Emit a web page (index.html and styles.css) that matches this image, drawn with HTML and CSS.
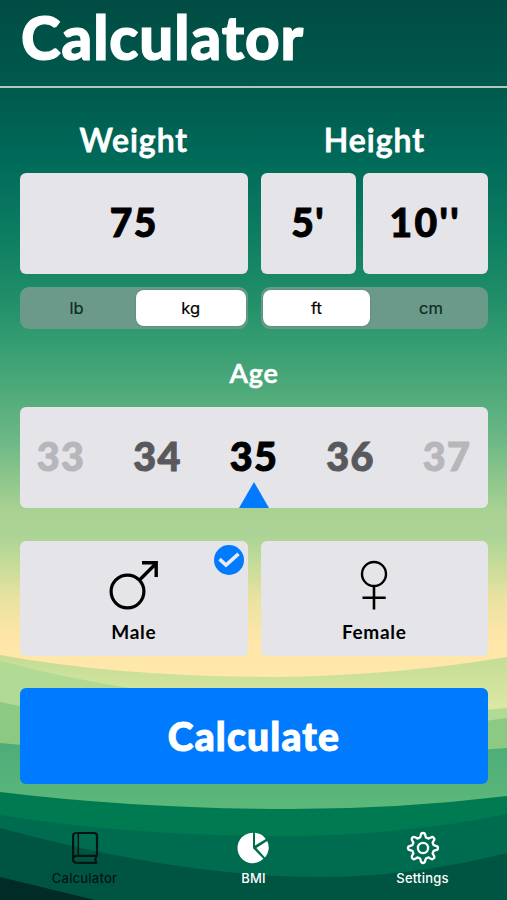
FILE: index.html
```html
<!DOCTYPE html>
<html lang="en">
<head>
<meta charset="utf-8">
<meta name="viewport" content="width=device-width, initial-scale=1">
<title>Calculator</title>
<link rel="stylesheet" href="styles.css">
</head>
<body>
<svg class="scene" viewBox="0 0 507 900" preserveAspectRatio="none" aria-hidden="true">
  <defs>
    <linearGradient id="sky" x1="0" y1="0" x2="0" y2="900" gradientUnits="userSpaceOnUse">
      <stop offset="0" stop-color="#004c43"/>
      <stop offset=".1" stop-color="#005a4e"/>
      <stop offset=".18" stop-color="#006b5a"/>
      <stop offset=".26" stop-color="#0d7d62"/>
      <stop offset=".33" stop-color="#208e68"/>
      <stop offset=".385" stop-color="#379e73"/>
      <stop offset=".44" stop-color="#52ab7b"/>
      <stop offset=".49" stop-color="#6db886"/>
      <stop offset=".54" stop-color="#93c98d"/>
      <stop offset=".57" stop-color="#abd293"/>
      <stop offset=".595" stop-color="#abd395"/>
      <stop offset=".62" stop-color="#bfda97"/>
      <stop offset=".665" stop-color="#eae2a1"/>
      <stop offset=".71" stop-color="#ffe6a8"/>
      <stop offset=".76" stop-color="#ffe8ab"/>
    </linearGradient>
    <linearGradient id="meadow" x1="0" y1="657" x2="0" y2="710" gradientUnits="userSpaceOnUse">
      <stop offset="0" stop-color="#c4dc96"/>
      <stop offset="1" stop-color="#dce9a3"/>
    </linearGradient>
    <linearGradient id="valley" x1="0" y1="740" x2="0" y2="809" gradientUnits="userSpaceOnUse">
      <stop offset="0" stop-color="#4dab78"/>
      <stop offset="1" stop-color="#5cb87a"/>
    </linearGradient>
  </defs>
  <rect width="507" height="900" fill="url(#sky)"/>
  <path fill="url(#meadow)" d="M0 655Q120 677 280 677Q400 675 507 657V900H0Z"/>
  <path fill="#b1da94" d="M0 661Q65 678 130 688Q330 725 507 708V900H0Z"/>
  <path fill="#8cc983" d="M0 702Q250 755 507 718V900H0Z"/>
  <path fill="url(#valley)" d="M0 743Q250 768 507 748V900H0Z"/>
  <path fill="#007a50" d="M0 792Q140 809 290 809Q400 809 507 796V900H0Z"/>
  <path fill="#006c4f" d="M0 815Q130 836 280 836Q400 836 507 814V900H0Z"/>
  <path fill="#005542" d="M0 828Q180 877 320 877Q410 877 507 853V900H0Z"/>
  <path fill="#002b26" d="M0 877L95 900H0Z"/>
</svg>

<div class="app">
  <header class="header"><h1 class="title">Calculator</h1></header>

  <main class="content">
    <div class="measures">
      <section class="measure">
        <h2 class="label">Weight</h2>
        <div class="values"><div class="card value">75</div></div>
        <div class="segment segment-weight"><span class="option">lb</span><span class="option selected">kg</span></div>
      </section>
      <section class="measure">
        <h2 class="label">Height</h2>
        <div class="values values-height"><div class="card value">5'</div><div class="card value inches">10''</div></div>
        <div class="segment segment-height"><span class="option selected">ft</span><span class="option">cm</span></div>
      </section>
    </div>

    <h2 class="label label-age">Age</h2>
    <div class="card ages">
      <span class="age far">33</span><span class="age near">34</span><span class="age">35</span><span class="age near">36</span><span class="age far">37</span>
      <svg class="pointer" viewBox="0 0 30 26"><path fill="#007aff" d="M15 0L30 26H0Z"/></svg>
    </div>

    <div class="genders">
      <div class="card gender">
        <svg class="gender-icon" viewBox="0 0 50 50" fill="none" stroke="#000"><circle cx="18.5" cy="31.5" r="16.4" stroke-width="3.2"/><path stroke-width="3.4" d="M30.5 20L47 3.5M33 2.7H47.2V17"/></svg>
        <span>Male</span>
        <svg class="badge" viewBox="0 0 30 30"><circle cx="15" cy="15" r="15" fill="#007aff"/><path d="M5.5 14.2L12 20L24.5 8.8" fill="none" stroke="#e9eaf2" stroke-width="3.6"/></svg>
      </div>
      <div class="card gender">
        <svg class="gender-icon" viewBox="0 0 50 50" fill="none" stroke="#000"><circle cx="25" cy="14" r="12" stroke-width="2.4"/><path stroke-width="2.6" d="M25 26V49.5M13.5 37.7H36.7"/></svg>
        <span>Female</span>
      </div>
    </div>

    <button class="calculate" type="button">Calculate</button>
  </main>

  <nav class="tabs">
    <a class="tab active">
      <svg class="tab-icon" viewBox="0 0 34 34" fill="none" stroke="currentColor" stroke-width="2.2" stroke-linejoin="round"><path d="M8 2H26a3 3 0 0 1 3 3V24.8H8.5a3.4 3.4 0 0 0-3.4 3.4a3.2 3.2 0 0 0 3.4 3.6H28.5l-1.4-3.4L28.8 24.8M5.1 28.5V5A2.8 2.8 0 0 1 8 2"/><path d="M10.3 2V24.5" stroke-width="1.5"/></svg>
      <span>Calculator</span>
    </a>
    <a class="tab">
      <svg class="tab-icon" viewBox="0 0 34 34" fill="currentColor"><path d="M16 1.8V17.2L26.4 27.8A15.2 15.2 0 1 1 16 1.8ZM18 1.8A15 15 0 0 1 28.8 8L18 14.6ZM30.2 10A15 15 0 0 1 28 26.5L19.4 17Z"/></svg>
      <span>BMI</span>
    </a>
    <a class="tab">
      <svg class="tab-icon" viewBox="0 0 34 34" fill="none" stroke="currentColor" stroke-width="2.3" stroke-linejoin="round"><path d="M14.8 4.2Q15 2 17 2T19.2 4.2L19.9 6.5L22.6 7.6L24.8 6.4Q26.4 5.4 27.7 6.7T27.9 9.4L26.6 11.6L27.6 14.1L30 14.8Q32 15.2 32 17T30 19.2L27.6 19.9L26.6 22.4L27.9 24.6Q29 26.2 27.6 27.5T24.8 27.7L22.6 26.4L19.9 27.5L19.2 29.8Q18.8 32 17 32T14.8 29.8L14.1 27.5L11.4 26.4L9.2 27.7Q7.6 28.8 6.4 27.5T6.1 24.6L7.4 22.4L6.4 19.9L4 19.2Q2 18.8 2 17T4 14.8L6.4 14.1L7.4 11.6L6.1 9.4Q5.1 7.8 6.3 6.6T9.2 6.3L11.4 7.6L14.1 6.5Z"/><circle cx="17" cy="17" r="5.1"/></svg>
      <span>Settings</span>
    </a>
  </nav>
</div>
</body>
</html>
```
FILE: styles.css
```css
* { box-sizing: border-box; }
body { margin: 0; font-family: Lato, "Liberation Sans", sans-serif; color: #000; }
h1, h2 { margin: 0; }
svg { display: block; }
.scene { position: absolute; inset: 0; width: 100%; height: 900px; z-index: -1; }
.app { height: 900px; display: flex; flex-direction: column; overflow: hidden; }
.header { height: 88px; padding: 0 21px; border-bottom: 2px solid #b5c5bf; }
.title { color: #fff; font-size: 60px; line-height: 74px; font-weight: 900; letter-spacing: .95px; white-space: nowrap; -webkit-text-stroke: 1.2px #fff; }
.content { padding: 0 19px 0 20px; }
.measures { display: grid; grid-template-columns: 1fr 1fr; gap: 13px; padding-top: 32px; }
.label { color: #fff; font-size: 32px; line-height: 39px; font-weight: 600; letter-spacing: 1px; text-align: center; height: 53px; -webkit-text-stroke: .8px #fff; }
.values { display: grid; height: 101px; }
.values-height { grid-template-columns: 95.5px 1fr; gap: 6.5px; }
.card { background: #e5e4e9; border-radius: 6px; }
.value { display: flex; justify-content: center; align-items: center; padding-bottom: 3px; font-size: 39px; font-weight: 900; letter-spacing: 1.4px; -webkit-text-stroke: .9px; }
.inches { letter-spacing: 2.4px; }
.segment { display: grid; height: 42px; margin-top: 13px; padding: 3px 2px; border-radius: 9px; background: #6b9a8b; font: 16.5px/36px Inter, sans-serif; text-align: center; }
.segment-weight { grid-template-columns: 114px 109.5px; }
.segment-height { grid-template-columns: 107px 1fr; padding: 3px 0 3px 2.5px; }
.option { border-radius: 8px; color: #0d2a22; -webkit-text-stroke: .2px; }
.option:first-child:not(.selected) { padding-right: 5px; }
.option:last-child:not(.selected) { padding-left: 4px; }
.selected { background: #fff; color: #000; box-shadow: 0 0 2px #3c635680; }
.label-age { font-size: 27px; line-height: 35px; height: 51.5px; margin-top: 26px; letter-spacing: .8px; -webkit-text-stroke: .6px #fff; }
.ages { position: relative; height: 101px; display: grid; grid-template-columns: repeat(5, 96.5px); justify-content: center; align-items: center; text-align: center; padding-bottom: 4px; font-size: 39.5px; font-weight: 900; letter-spacing: 1.4px; -webkit-text-stroke: 1px; }
.near { color: #59595d; }
.far { color: #b6b6bb; }
.pointer { position: absolute; left: 219px; bottom: 0; width: 30px; height: 26px; }
.genders { display: grid; grid-template-columns: 1fr 1fr; gap: 13px; margin-top: 33px; }
.gender { position: relative; height: 115.5px; display: flex; flex-direction: column; align-items: center; padding-top: 19px; font-size: 19px; line-height: 24px; font-weight: 700; letter-spacing: .7px; }
.gender-icon { width: 50px; height: 50px; margin-bottom: 10px; }
.badge { position: absolute; right: 4px; top: 4px; width: 30px; height: 30px; }
.calculate { display: block; width: 100%; height: 95.5px; margin-top: 32px; padding: 0; border: 0; border-radius: 6px; background: #007aff; color: #fff; font: 900 39px/90px Lato, sans-serif; letter-spacing: 1.2px; -webkit-text-stroke: 1px; }
.tabs { display: grid; grid-template-columns: repeat(3, 1fr); padding-top: 47px; }
.tab { display: flex; flex-direction: column; align-items: center; color: #fff; font: 500 13px/18px Inter, sans-serif; letter-spacing: .2px; }
.tab-icon { width: 34px; height: 34px; margin-bottom: 4px; }
.active { color: #001612; }
```
